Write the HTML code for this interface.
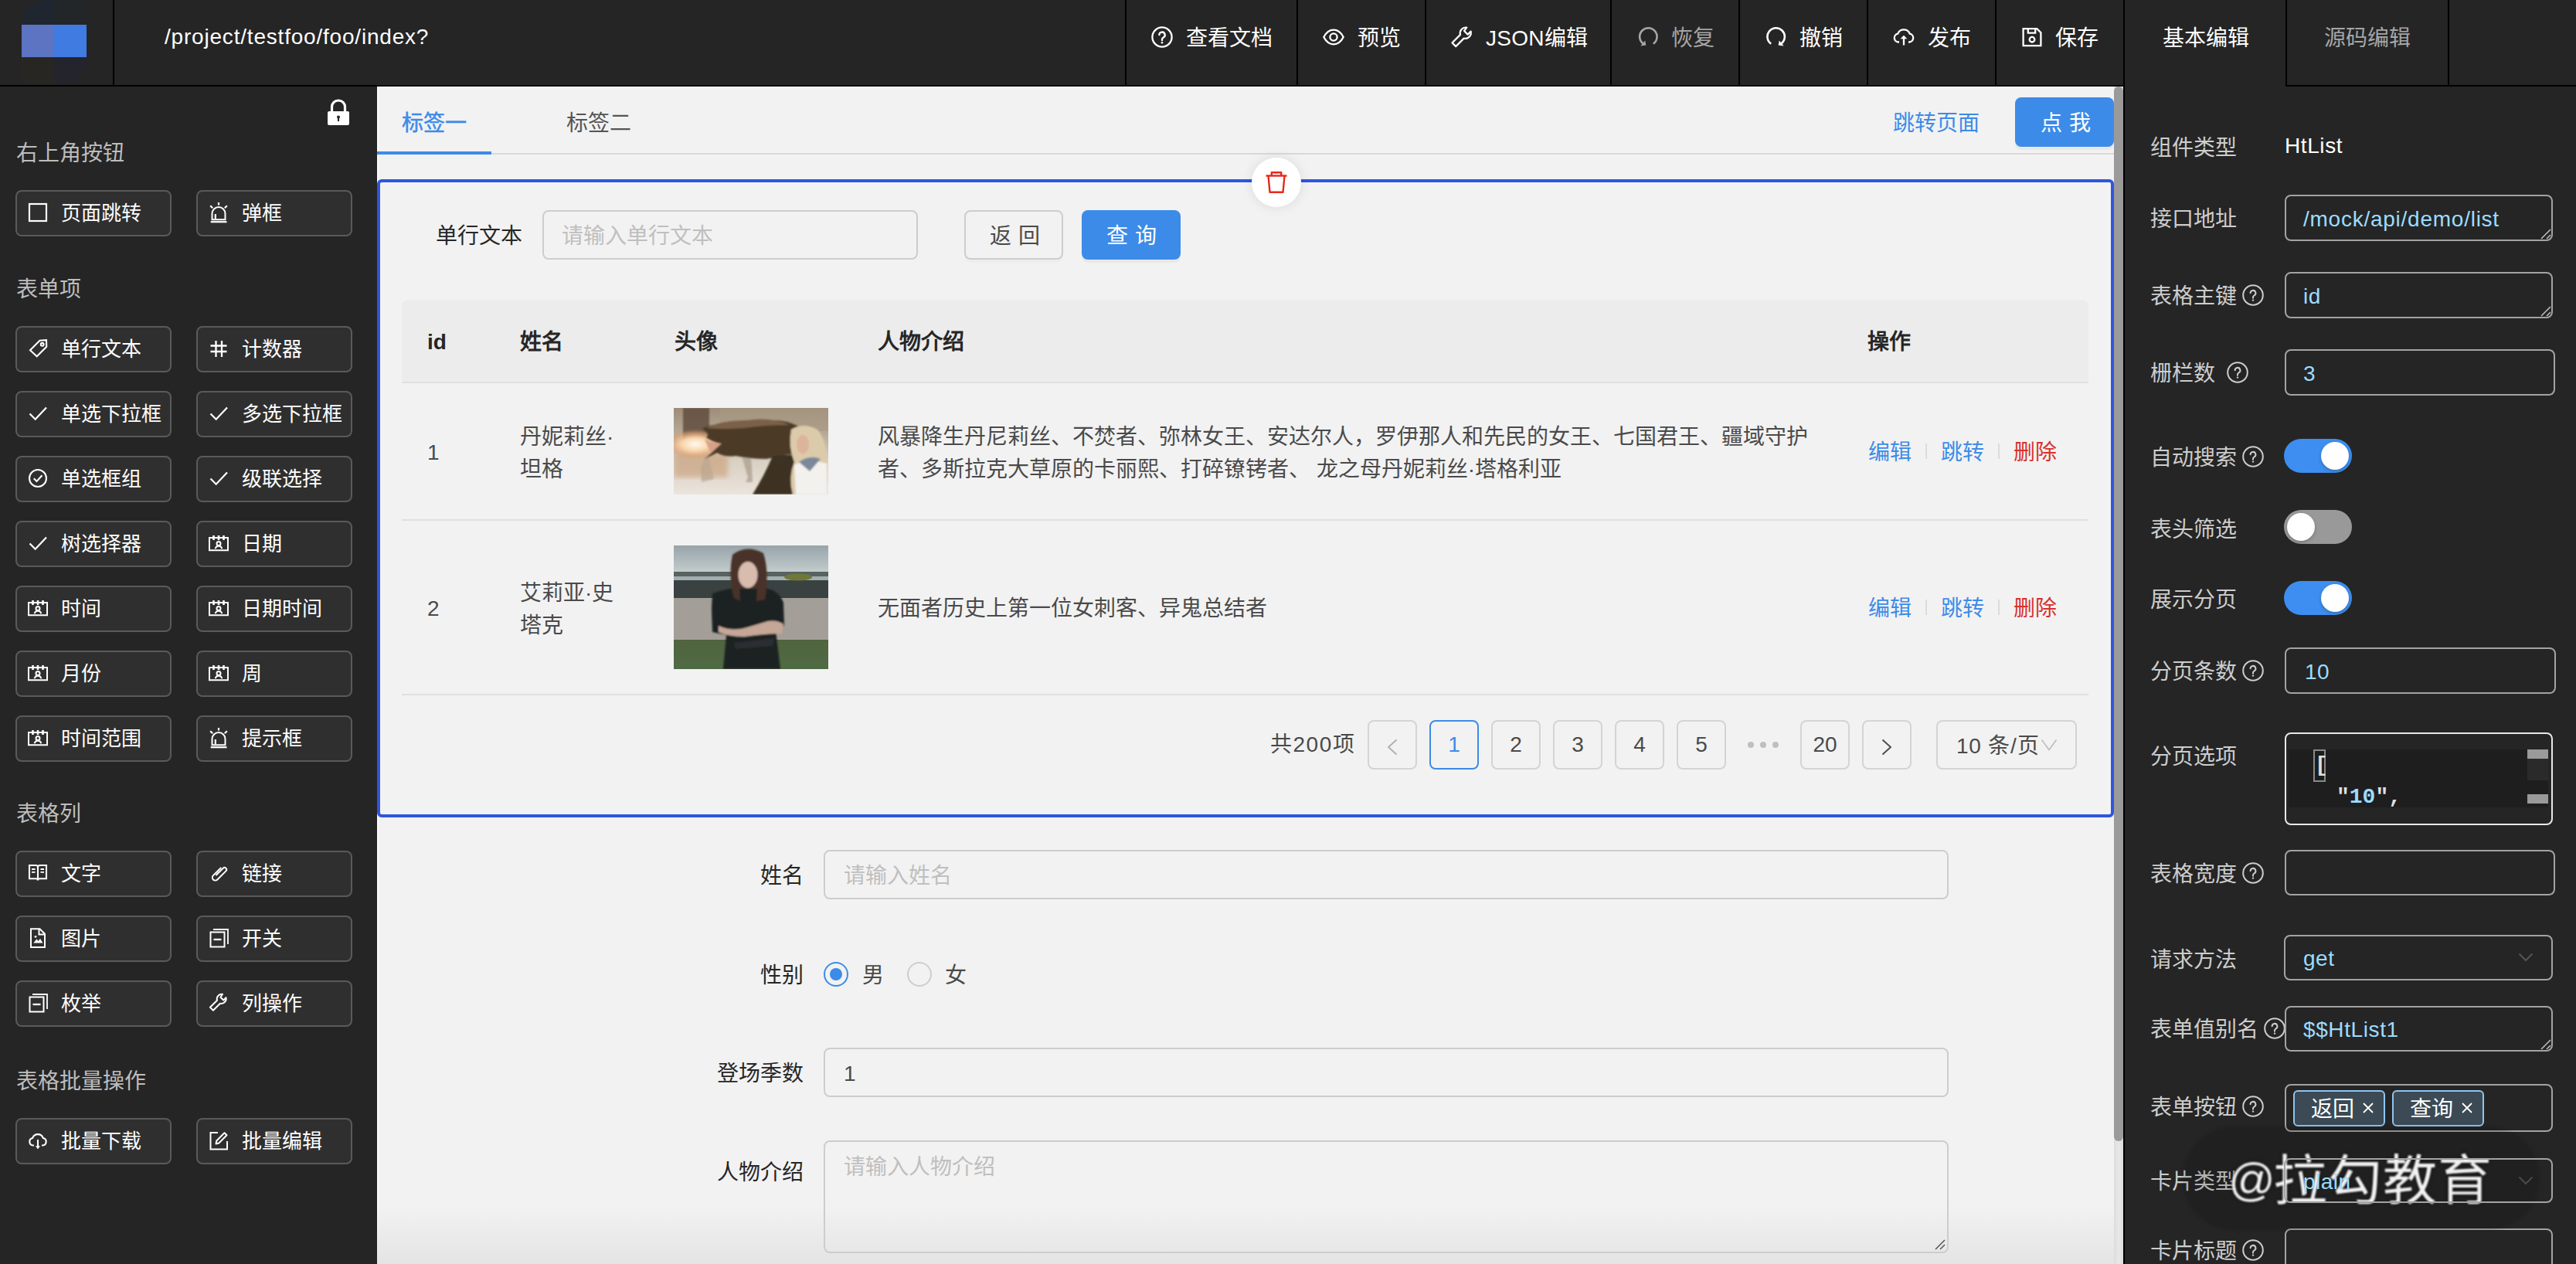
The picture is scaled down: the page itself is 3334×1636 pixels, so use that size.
<!DOCTYPE html>
<html lang="zh-CN">
<head>
<meta charset="utf-8">
<style>
*{box-sizing:border-box;margin:0;padding:0}
html,body{width:3334px;height:1636px;overflow:hidden;background:#252525;font-family:"Liberation Sans",sans-serif;font-size:28px}
.a{position:absolute}
.t{position:absolute;white-space:nowrap;height:40px;line-height:40px}
svg{display:block;position:absolute;overflow:visible}
.hl{position:absolute;background:#000}
.sb{position:absolute;width:202px;height:60px;border:2px solid #5a5a5a;border-radius:8px;background:#2f2f2f;color:#fff}
.sb span{position:absolute;left:57px;top:8px;line-height:40px;font-size:26px;white-space:nowrap}
.inp{position:absolute;border:2px solid #cdcdcd;border-radius:8px}
.ri{position:absolute;border:2px solid #a3a3a3;border-radius:8px}
</style>
</head>
<body>
<div class="a" style="left:0px;top:0px;width:3334px;height:110px;background:#252525"></div>
<div class="a" style="left:28px;top:0;width:86px;height:108px;border-radius:32px 0 32px 0;overflow:hidden"><div class="a" style="left:0;top:0;width:42px;height:54px;background:#1f2630"></div><div class="a" style="left:42px;top:0;width:70px;height:54px;background:#232628"></div><div class="a" style="left:0;top:54px;width:42px;height:54px;background:#282622"></div><div class="a" style="left:42px;top:54px;width:70px;height:54px;background:#24242d"></div></div>
<div class="a" style="left:28px;top:32px;width:42px;height:42px;background:#5c74c2"></div>
<div class="a" style="left:70px;top:32px;width:42px;height:42px;background:#3f7be1"></div>
<div class="a" style="left:146px;top:0px;width:2px;height:110px;background:#000"></div>
<div class="t" style="left:213px;top:28px;color:#fff;font-size:28px;letter-spacing:0.8px">/project/testfoo/foo/index?</div>
<div class="a" style="left:1456px;top:0px;width:2px;height:110px;background:#000"></div>
<div class="a" style="left:1678px;top:0px;width:2px;height:110px;background:#000"></div>
<div class="a" style="left:1844px;top:0px;width:2px;height:110px;background:#000"></div>
<div class="a" style="left:2084px;top:0px;width:2px;height:110px;background:#000"></div>
<div class="a" style="left:2250px;top:0px;width:2px;height:110px;background:#000"></div>
<div class="a" style="left:2416px;top:0px;width:2px;height:110px;background:#000"></div>
<div class="a" style="left:2582px;top:0px;width:2px;height:110px;background:#000"></div>
<div class="a" style="left:2748px;top:0px;width:2px;height:110px;background:#000"></div>
<div class="a" style="left:2958px;top:0px;width:2px;height:110px;background:#000"></div>
<div class="a" style="left:3168px;top:0px;width:2px;height:110px;background:#000"></div>
<svg style="left:1490px;top:34px" width="28" height="28" viewBox="0 0 28 28" fill="none" stroke="#fff" stroke-width="2.3"><circle cx="14" cy="14" r="12.6"/><path d="M10.3 11.2a3.7 3.7 0 1 1 5.4 3.3c-1.1.6-1.7 1.3-1.7 2.5v1.2" stroke-linecap="round"/><circle cx="14" cy="21.2" r="1.3" fill="#fff" stroke="none"/></svg>
<div class="t" style="left:1535px;top:30px;color:#fff;font-size:28px;">查看文档</div>
<svg style="left:1712px;top:34px" width="28" height="28" viewBox="0 0 28 28" fill="none" stroke="#fff" stroke-width="2.3"><path d="M1.3 14C4.5 7.8 9 4.7 14 4.7S23.5 7.8 26.7 14C23.5 20.2 19 23.3 14 23.3S4.5 20.2 1.3 14Z" stroke-linejoin="round"/><circle cx="14" cy="14" r="4.6"/></svg>
<div class="t" style="left:1757px;top:30px;color:#fff;font-size:28px;">预览</div>
<svg style="left:1878px;top:34px" width="28" height="28" viewBox="0 0 28 28" fill="none" stroke="#fff" stroke-width="2.2" stroke-linejoin="round"><path d="M20.3 1.6A7.4 7.4 0 0 0 12 10.9L1.5 21.4 6.2 26.1 16.7 15.6A7.4 7.4 0 0 0 25.6 6.6L21.6 10.6 17 6 Z"/></svg>
<div class="t" style="left:1923px;top:30px;color:#fff;font-size:28px;letter-spacing:0.3px">JSON编辑</div>
<svg style="left:2119px;top:34px" width="28" height="28" viewBox="0 0 28 28" fill="none" stroke="#a6a6a6" stroke-width="2.6"><path d="M7.5 22.3A11.2 11.2 0 1 1 20.8 22.6"/><path d="M4.3 25.4 11.3 24.6 10.2 18.5Z" fill="#a6a6a6" stroke="none"/></svg>
<div class="t" style="left:2163px;top:30px;color:#a6a6a6;font-size:28px;">恢复</div>
<svg style="left:2285px;top:34px" width="28" height="28" viewBox="0 0 28 28" fill="none" stroke="#fff" stroke-width="2.6"><path d="M20.5 22.3A11.2 11.2 0 1 0 7.2 22.6"/><path d="M23.7 25.4 16.7 24.6 17.8 18.5Z" fill="#fff" stroke="none"/></svg>
<div class="t" style="left:2329px;top:30px;color:#fff;font-size:28px;">撤销</div>
<svg style="left:2450px;top:34px" width="28" height="28" viewBox="0 0 28 28" fill="none" stroke="#fff" stroke-width="2.3"><path d="M8 20.5H7A5.5 5.5 0 0 1 6.3 9.6 8.3 8.3 0 0 1 21.7 9.6 5.5 5.5 0 0 1 21 20.5H20"/><path d="M14 24.5V13"/><path d="M10.2 16.3 14 12.2 17.8 16.3" fill="#fff" stroke-width="1"/></svg>
<div class="t" style="left:2495px;top:30px;color:#fff;font-size:28px;">发布</div>
<svg style="left:2616px;top:34px" width="28" height="28" viewBox="0 0 28 28" fill="none" stroke="#fff" stroke-width="2.3"><path d="M2.6 3.2H20.3L25.4 8.3V25.2H2.6Z"/><path d="M8.8 3.2V8.7H18.2V3.2"/><circle cx="14" cy="17.2" r="3.3"/></svg>
<div class="t" style="left:2660px;top:30px;color:#fff;font-size:28px;">保存</div>
<div class="t" style="left:2799px;top:30px;color:#fff;font-size:28px;">基本编辑</div>
<div class="t" style="left:3008px;top:30px;color:#a6a6a6;font-size:28px;">源码编辑</div>
<div class="a" style="left:0px;top:110px;width:2750px;height:2px;background:#000"></div>
<div class="a" style="left:2958px;top:110px;width:376px;height:2px;background:#000"></div>
<div class="a" style="left:0px;top:112px;width:488px;height:1524px;background:#252525"></div>
<svg style="left:423px;top:129px" width="30" height="34" viewBox="0 0 30 34"><path d="M6.5 15V9.5a8.5 8.5 0 0 1 17 0V15" fill="none" stroke="#fff" stroke-width="3.2"/><rect x="1" y="15" width="28" height="18" rx="2" fill="#fff"/><circle cx="15" cy="22.5" r="2" fill="#252525"/><rect x="14" y="23" width="2" height="5" fill="#252525"/></svg>
<div class="t" style="left:21px;top:179px;color:#bdbdbd;font-size:28px;">右上角按钮</div>
<div class="sb" style="left:20px;top:246px"><span>页面跳转</span></div>
<svg style="left:37px;top:263px" width="24" height="24" viewBox="0 0 24 24"><rect x="1" y="1" width="22" height="22" fill="none" stroke="#fff" stroke-width="2.2"/></svg>
<div class="sb" style="left:254px;top:246px"><span>弹框</span></div>
<svg style="left:271px;top:262px" width="24" height="26" viewBox="0 0 24 26"><g fill="none" stroke="#fff" stroke-width="2"><path d="M3.5 22.3V14.5a8.5 8.5 0 0 1 17 0v7.8Z"/><path d="M7.8 21.5v-6.5" stroke-width="2.2"/><path d="M1.7 25.2h20.8" stroke-width="2.2"/><path d="M12 0v3.5M1.2 4.2l3 3M22.8 4.2l-3 3" stroke-width="2.2"/></g></svg>
<div class="t" style="left:21px;top:355px;color:#bdbdbd;font-size:28px;">表单项</div>
<div class="sb" style="left:20px;top:422px"><span>单行文本</span></div>
<svg style="left:37px;top:439px" width="24" height="24" viewBox="0 0 24 24"><g fill="none" stroke="#fff" stroke-width="2.1" stroke-linejoin="miter"><path d="M2 14.3 14.5 1.8 23 1.2 23.2 9.8 10.7 22.3Z"/><circle cx="17.7" cy="6.8" r="1.9"/></g></svg>
<div class="sb" style="left:254px;top:422px"><span>计数器</span></div>
<svg style="left:271px;top:439px" width="24" height="24" viewBox="0 0 24 24"><g fill="none" stroke="#fff" stroke-width="2.3"><path d="M8.5 2v21M16 2v21M1.5 8.5h21M1.5 16h21"/></g></svg>
<div class="sb" style="left:20px;top:506px"><span>单选下拉框</span></div>
<svg style="left:37px;top:523px" width="24" height="24" viewBox="0 0 24 24"><path d="M1.5 12.5 8.7 19.7 23 4.5" fill="none" stroke="#fff" stroke-width="2.3"/></svg>
<div class="sb" style="left:254px;top:506px"><span>多选下拉框</span></div>
<svg style="left:271px;top:523px" width="24" height="24" viewBox="0 0 24 24"><path d="M1.5 12.5 8.7 19.7 23 4.5" fill="none" stroke="#fff" stroke-width="2.3"/></svg>
<div class="sb" style="left:20px;top:590px"><span>单选框组</span></div>
<svg style="left:37px;top:607px" width="24" height="24" viewBox="0 0 24 24"><g fill="none" stroke="#fff" stroke-width="2.1"><circle cx="12" cy="12" r="11"/><path d="M6.8 12.3 10.5 16 17.5 8.3"/></g></svg>
<div class="sb" style="left:254px;top:590px"><span>级联选择</span></div>
<svg style="left:271px;top:607px" width="24" height="24" viewBox="0 0 24 24"><path d="M1.5 12.5 8.7 19.7 23 4.5" fill="none" stroke="#fff" stroke-width="2.3"/></svg>
<div class="sb" style="left:20px;top:674px"><span>树选择器</span></div>
<svg style="left:37px;top:691px" width="24" height="24" viewBox="0 0 24 24"><path d="M1.5 12.5 8.7 19.7 23 4.5" fill="none" stroke="#fff" stroke-width="2.3"/></svg>
<div class="sb" style="left:254px;top:674px"><span>日期</span></div>
<svg style="left:270px;top:693px" width="26" height="21" viewBox="0 0 26 21"><g fill="none" stroke="#fff" stroke-width="2"><path d="M1 3H25V19.2H1Z"/><path d="M6.5 0V6M13 0V6M19.5 0V6" stroke-width="2.6"/><circle cx="13" cy="10.4" r="2.5"/><path d="M8.7 17.2a4.4 4.4 0 0 1 8.6 0"/></g></svg>
<div class="sb" style="left:20px;top:758px"><span>时间</span></div>
<svg style="left:36px;top:777px" width="26" height="21" viewBox="0 0 26 21"><g fill="none" stroke="#fff" stroke-width="2"><path d="M1 3H25V19.2H1Z"/><path d="M6.5 0V6M13 0V6M19.5 0V6" stroke-width="2.6"/><circle cx="13" cy="10.4" r="2.5"/><path d="M8.7 17.2a4.4 4.4 0 0 1 8.6 0"/></g></svg>
<div class="sb" style="left:254px;top:758px"><span>日期时间</span></div>
<svg style="left:270px;top:777px" width="26" height="21" viewBox="0 0 26 21"><g fill="none" stroke="#fff" stroke-width="2"><path d="M1 3H25V19.2H1Z"/><path d="M6.5 0V6M13 0V6M19.5 0V6" stroke-width="2.6"/><circle cx="13" cy="10.4" r="2.5"/><path d="M8.7 17.2a4.4 4.4 0 0 1 8.6 0"/></g></svg>
<div class="sb" style="left:20px;top:842px"><span>月份</span></div>
<svg style="left:36px;top:861px" width="26" height="21" viewBox="0 0 26 21"><g fill="none" stroke="#fff" stroke-width="2"><path d="M1 3H25V19.2H1Z"/><path d="M6.5 0V6M13 0V6M19.5 0V6" stroke-width="2.6"/><circle cx="13" cy="10.4" r="2.5"/><path d="M8.7 17.2a4.4 4.4 0 0 1 8.6 0"/></g></svg>
<div class="sb" style="left:254px;top:842px"><span>周</span></div>
<svg style="left:270px;top:861px" width="26" height="21" viewBox="0 0 26 21"><g fill="none" stroke="#fff" stroke-width="2"><path d="M1 3H25V19.2H1Z"/><path d="M6.5 0V6M13 0V6M19.5 0V6" stroke-width="2.6"/><circle cx="13" cy="10.4" r="2.5"/><path d="M8.7 17.2a4.4 4.4 0 0 1 8.6 0"/></g></svg>
<div class="sb" style="left:20px;top:926px"><span>时间范围</span></div>
<svg style="left:36px;top:945px" width="26" height="21" viewBox="0 0 26 21"><g fill="none" stroke="#fff" stroke-width="2"><path d="M1 3H25V19.2H1Z"/><path d="M6.5 0V6M13 0V6M19.5 0V6" stroke-width="2.6"/><circle cx="13" cy="10.4" r="2.5"/><path d="M8.7 17.2a4.4 4.4 0 0 1 8.6 0"/></g></svg>
<div class="sb" style="left:254px;top:926px"><span>提示框</span></div>
<svg style="left:271px;top:942px" width="24" height="26" viewBox="0 0 24 26"><g fill="none" stroke="#fff" stroke-width="2"><path d="M3.5 22.3V14.5a8.5 8.5 0 0 1 17 0v7.8Z"/><path d="M7.8 21.5v-6.5" stroke-width="2.2"/><path d="M1.7 25.2h20.8" stroke-width="2.2"/><path d="M12 0v3.5M1.2 4.2l3 3M22.8 4.2l-3 3" stroke-width="2.2"/></g></svg>
<div class="t" style="left:21px;top:1034px;color:#bdbdbd;font-size:28px;">表格列</div>
<div class="sb" style="left:20px;top:1101px"><span>文字</span></div>
<svg style="left:37px;top:1118px" width="24" height="24" viewBox="0 0 24 24"><g fill="none" stroke="#fff" stroke-width="2.1"><path d="M1 2h8.5q2.5 0 2.5 2.5V21.5q0-2.2-2.5-2.2H1ZM23 2h-8.5Q12 2 12 4.5V21.5q0-2.2 2.5-2.2H23Z"/><path d="M4 7h4.5M4 10.8h4.5M15.5 7H20M15.5 10.8H20" stroke-width="1.8"/></g></svg>
<div class="sb" style="left:254px;top:1101px"><span>链接</span></div>
<svg style="left:271px;top:1118px" width="24" height="24" viewBox="0 0 24 24"><g transform="rotate(45 12 13)"><path d="M8.5 5V19.5a3.8 3.8 0 0 0 7.6 0V3.8a2.6 2.6 0 0 0-5.2 0V17" fill="none" stroke="#fff" stroke-width="2"/></g></svg>
<div class="sb" style="left:20px;top:1185px"><span>图片</span></div>
<svg style="left:37px;top:1201px" width="24" height="26" viewBox="0 0 24 26"><g fill="none" stroke="#fff" stroke-width="2"><path d="M3 1.2h11.5L21 7.7V25H3Z"/><path d="M13.5 1.2v7.3H21"/></g><circle cx="9" cy="11.3" r="1.4" fill="#fff"/><path d="M6.3 19.5 10.5 14.5 12.5 17 15 14 18.5 19.5Z" fill="#fff"/></svg>
<div class="sb" style="left:254px;top:1185px"><span>开关</span></div>
<svg style="left:271px;top:1202px" width="24" height="24" viewBox="0 0 24 24"><g fill="none" stroke="#fff" stroke-width="2"><rect x="1.5" y="4.5" width="18" height="19"/><path d="M5 1h19v19" stroke-width="1.8"/><path d="M5.5 14h10" stroke-width="2.3"/></g></svg>
<div class="sb" style="left:20px;top:1269px"><span>枚举</span></div>
<svg style="left:37px;top:1286px" width="24" height="24" viewBox="0 0 24 24"><g fill="none" stroke="#fff" stroke-width="2"><rect x="1.5" y="4.5" width="18" height="19"/><path d="M5 1h19v19" stroke-width="1.8"/><path d="M5.5 14h10" stroke-width="2.3"/></g></svg>
<div class="sb" style="left:254px;top:1269px"><span>列操作</span></div>
<svg style="left:271px;top:1286px" width="24" height="24" viewBox="0 0 24 24"><path d="M17 .8A6.2 6.2 0 0 0 10 8.7L.9 17.8 4.9 21.8 14 12.7A6.2 6.2 0 0 0 21.5 5.2L18.2 8.5 14.4 4.7Z" fill="none" stroke="#fff" stroke-width="2" stroke-linejoin="round"/></svg>
<div class="t" style="left:21px;top:1380px;color:#bdbdbd;font-size:28px;">表格批量操作</div>
<div class="sb" style="left:20px;top:1447px"><span>批量下载</span></div>
<svg style="left:37px;top:1464px" width="24" height="24" viewBox="0 0 24 24"><g fill="none" stroke="#fff" stroke-width="2.1"><path d="M7 18.5H5.8A4.8 4.8 0 0 1 5.2 9 7.2 7.2 0 0 1 18.8 9 4.8 4.8 0 0 1 18.2 18.5H17"/><path d="M12 11v11.5"/></g><path d="M8.8 19.2 12 23 15.2 19.2Z" fill="#fff"/></svg>
<div class="sb" style="left:254px;top:1447px"><span>批量编辑</span></div>
<svg style="left:271px;top:1464px" width="24" height="24" viewBox="0 0 24 24"><g fill="none" stroke="#fff" stroke-width="2"><path d="M11 2H1.5v21.5H23V13"/><path d="M8.5 16.5 9.3 12.5 19.5 2.3 22.5 5.3 12.3 15.5Z" stroke-linejoin="round"/></g></svg>
<div class="a" style="left:488px;top:112px;width:2260px;height:1524px;background:#f2f2f2"></div>
<div class="a" style="left:488px;top:112px;width:2248px;height:2px;background:#fff"></div>
<div class="a" style="left:488px;top:112px;width:2px;height:1524px;background:#fafafa"></div>
<div class="a" style="left:488px;top:1560px;width:2248px;height:76px;background:linear-gradient(#f2f2f200,#e4e4e4)"></div>
<div class="t" style="left:520px;top:140px;color:#3d8be8;font-size:28px;-webkit-text-stroke:0.5px #3d8be8">标签一</div>
<div class="t" style="left:733px;top:140px;color:#555;font-size:28px;">标签二</div>
<div class="a" style="left:488px;top:198px;width:2248px;height:2px;background:#d9d9d9"></div>
<div class="a" style="left:488px;top:196px;width:148px;height:4px;background:#3d8be8"></div>
<div class="t" style="left:2450px;top:140px;color:#3d8be8;font-size:28px;">跳转页面</div>
<div class="a" style="left:2608px;top:126px;width:128px;height:64px;border-radius:8px;background:#3d8be8;box-shadow:0 4px 0 rgba(0,0,0,0.04)"></div>
<div class="t" style="left:2641px;top:140px;color:#fff;font-size:28px;letter-spacing:0.6px">点&nbsp;我</div>
<div class="a" style="left:488px;top:232px;width:2248px;height:826px;border:4px solid #2f55e0;border-radius:6px"></div>
<div class="a" style="left:1620px;top:204px;width:64px;height:64px;border-radius:50%;background:#fff;box-shadow:0 0 16px rgba(0,0,0,0.10)"></div>
<svg style="left:1637px;top:221px" width="30" height="30" viewBox="0 0 30 30" fill="none" stroke="#e8271a" stroke-width="2.4" stroke-linejoin="round"><path d="M1.5 6.5H28.5"/><path d="M8.8 6.5V2.2H21.2V6.5"/><path d="M4.5 6.5 6.5 27.8H23.5L25.5 6.5"/></svg>
<div class="t" style="left:564px;top:286px;color:#262626;font-size:28px;">单行文本</div>
<div class="inp" style="left:702px;top:272px;width:486px;height:64px"></div>
<div class="t" style="left:727px;top:286px;color:#bfbfbf;font-size:28px;">请输入单行文本</div>
<div class="a" style="left:1248px;top:272px;width:128px;height:64px;border:2px solid #cdcdcd;border-radius:8px;box-shadow:0 4px 0 rgba(0,0,0,0.02)"></div>
<div class="t" style="left:1281px;top:286px;color:#4a4a4a;font-size:28px;letter-spacing:0.6px">返&nbsp;回</div>
<div class="a" style="left:1400px;top:272px;width:128px;height:64px;border-radius:8px;background:#3d8be8;box-shadow:0 4px 0 rgba(0,0,0,0.04)"></div>
<div class="t" style="left:1432px;top:286px;color:#fff;font-size:28px;letter-spacing:0.6px">查&nbsp;询</div>
<div class="a" style="left:520px;top:388px;width:2183px;height:106px;background:#ececec;border-radius:8px 8px 0 0"></div>
<div class="a" style="left:520px;top:494px;width:2183px;height:2px;background:#e0e0e0"></div>
<div class="t" style="left:553px;top:423px;color:#262626;font-size:28px;font-weight:bold">id</div>
<div class="t" style="left:673px;top:423px;color:#262626;font-size:28px;font-weight:bold">姓名</div>
<div class="t" style="left:873px;top:423px;color:#262626;font-size:28px;font-weight:bold">头像</div>
<div class="t" style="left:1136px;top:423px;color:#262626;font-size:28px;font-weight:bold">人物介绍</div>
<div class="t" style="left:2417px;top:423px;color:#262626;font-size:28px;font-weight:bold">操作</div>
<div class="a" style="left:520px;top:672px;width:2183px;height:2px;background:#e0e0e0"></div>
<div class="a" style="left:520px;top:898px;width:2183px;height:2px;background:#e0e0e0"></div>
<div class="t" style="left:553px;top:566px;color:#4a4a4a;font-size:28px;">1</div>
<div class="t" style="left:673px;top:546px;color:#4a4a4a;font-size:28px;">丹妮莉丝·</div>
<div class="t" style="left:673px;top:588px;color:#4a4a4a;font-size:28px;">坦格</div>
<div class="t" style="left:1136px;top:546px;color:#4a4a4a;font-size:28px;">风暴降生丹尼莉丝、不焚者、弥林女王、安达尔人，罗伊那人和先民的女王、七国君王、疆域守护</div>
<div class="t" style="left:1136px;top:588px;color:#4a4a4a;font-size:28px;">者、多斯拉克大草原的卡丽熙、打碎镣铐者、&nbsp;龙之母丹妮莉丝·塔格利亚</div>
<div class="t" style="left:553px;top:768px;color:#4a4a4a;font-size:28px;">2</div>
<div class="t" style="left:673px;top:748px;color:#4a4a4a;font-size:28px;">艾莉亚·史</div>
<div class="t" style="left:673px;top:790px;color:#4a4a4a;font-size:28px;">塔克</div>
<div class="t" style="left:1136px;top:768px;color:#4a4a4a;font-size:28px;">无面者历史上第一位女刺客、异鬼总结者</div>
<div class="t" style="left:2418px;top:566px;color:#3d8be8;font-size:28px;">编辑</div>
<div class="a" style="left:2492px;top:574px;width:2px;height:20px;background:#dcdcdc"></div>
<div class="t" style="left:2512px;top:566px;color:#3d8be8;font-size:28px;">跳转</div>
<div class="a" style="left:2586px;top:574px;width:2px;height:20px;background:#dcdcdc"></div>
<div class="t" style="left:2606px;top:566px;color:#d9302a;font-size:28px;">删除</div>
<div class="t" style="left:2418px;top:768px;color:#3d8be8;font-size:28px;">编辑</div>
<div class="a" style="left:2492px;top:776px;width:2px;height:20px;background:#dcdcdc"></div>
<div class="t" style="left:2512px;top:768px;color:#3d8be8;font-size:28px;">跳转</div>
<div class="a" style="left:2586px;top:776px;width:2px;height:20px;background:#dcdcdc"></div>
<div class="t" style="left:2606px;top:768px;color:#d9302a;font-size:28px;">删除</div>
<svg style="left:872px;top:528px;overflow:hidden" width="200" height="112" viewBox="0 0 200 112">
<defs><linearGradient id="bg1" x1="0" y1="0" x2="0" y2="1"><stop offset="0" stop-color="#9c8c78"/><stop offset="0.3" stop-color="#b8aa96"/><stop offset="0.6" stop-color="#d9cfc2"/><stop offset="1" stop-color="#ebe4dc"/></linearGradient>
<radialGradient id="fire" cx="0.5" cy="0.5" r="0.5"><stop offset="0" stop-color="#fffaf0"/><stop offset="0.45" stop-color="#f8d6ac"/><stop offset="0.8" stop-color="#e0a070" stop-opacity="0.6"/><stop offset="1" stop-color="#d09060" stop-opacity="0"/></radialGradient>
<filter id="bl"><feGaussianBlur stdDeviation="0.8"/></filter><filter id="bl3"><feGaussianBlur stdDeviation="3"/></filter></defs>
<rect width="200" height="112" fill="url(#bg1)"/>
<rect x="60" y="0" width="140" height="30" fill="#a89a84" opacity="0.6"/>
<rect x="12" y="0" width="34" height="44" fill="#5d4a3a" opacity="0.8" filter="url(#bl)"/>
<rect x="0" y="60" width="70" height="30" fill="#c89870" opacity="0.55" filter="url(#bl3)"/>
<ellipse cx="28" cy="47" rx="40" ry="19" fill="url(#fire)" filter="url(#bl)"/>
<g filter="url(#bl)">
<path d="M88 62 L96 90 L93 96 L102 96 L100 62Z" fill="#a69a8a" opacity="0.7"/>
<path d="M35 78 Q40 60 45 62 L52 92 L36 96Z" fill="#bba78e" opacity="0.7"/>
<path d="M37 27 Q48 20 62 23 Q85 14 110 18 Q140 12 162 24 L165 62 Q150 58 140 62 L120 66 Q100 66 80 62 Q66 64 56 58 L40 66 Q52 56 60 46 Q50 44 42 38 Q48 34 37 27Z" fill="#4b3a27"/>
<path d="M42 26 Q60 16 95 16 Q125 11 150 22 Q120 22 90 26 Q66 28 42 26Z" fill="#7a604a"/>
<path d="M40 40 Q50 46 62 46 L48 58 Q44 50 40 40Z" fill="#d8a088"/>
<path d="M102 112 Q118 86 128 62 L160 60 L162 112Z" fill="#3d3220"/>
<path d="M152 28 Q168 18 186 28 Q200 44 198 80 L196 112 L154 112 Q148 90 156 70 Q148 50 152 28Z" fill="#dccbaa"/>
<path d="M156 74 Q172 64 198 72 L198 112 L158 112Z" fill="#f3f1ee"/>
<ellipse cx="167" cy="47" rx="8" ry="12" fill="#dcb39c"/>
<path d="M162 70 Q176 60 190 66 L176 82 Z" fill="#7b879b"/>
</g></svg>
<svg style="left:872px;top:706px;overflow:hidden" width="200" height="160" viewBox="0 0 200 160">
<defs><linearGradient id="sky" x1="0" y1="0" x2="0" y2="1"><stop offset="0" stop-color="#97a4a9"/><stop offset="1" stop-color="#c5cecf"/></linearGradient>
<linearGradient id="grass" x1="0" y1="0" x2="0" y2="1"><stop offset="0" stop-color="#50643f"/><stop offset="1" stop-color="#4f6b44"/></linearGradient>
<filter id="bl2"><feGaussianBlur stdDeviation="0.8"/></filter></defs>
<rect width="200" height="36" fill="url(#sky)"/>
<rect y="34" width="200" height="7" fill="#58625f"/>
<rect y="40" width="200" height="6" fill="#a2afb0"/>
<rect y="45" width="200" height="24" fill="#3a4241"/>
<rect y="68" width="200" height="56" fill="#a39f98"/>
<rect y="122" width="200" height="38" fill="url(#grass)"/>
<ellipse cx="161" cy="41" rx="18" ry="4.5" fill="#6f7838"/>
<g filter="url(#bl2)">
<path d="M50 62 Q66 56 84 55 L116 55 Q136 57 142 74 L143 104 L132 110 L138 160 L64 160 L68 116 L50 112 L49 82Z" fill="#1d2424"/>
<path d="M76 12 Q94 -2 116 10 Q124 34 118 70 L107 72 L108 56 L85 56 L86 72 L78 68 Q70 40 76 12Z" fill="#4a3229"/>
<ellipse cx="96" cy="38" rx="12.5" ry="17" fill="#d8bcae"/>
<path d="M58 104 Q76 112 95 106 L122 98 Q134 96 142 102 L140 114 Q120 114 92 118 Q70 118 58 112Z" fill="#c5a697"/>
<path d="M78 126 L130 120 L128 130 L80 134Z" fill="#2b2f30"/>
</g></svg>
<div class="t" style="left:1644px;top:944px;color:#4a4a4a;font-size:28px;letter-spacing:1.5px">共200项</div>
<div class="a" style="left:1770px;top:932px;width:64px;height:64px;border:2px solid #d4d4d4;border-radius:8px;text-align:center;line-height:60px;color:#4a4a4a;font-size:28px"><svg style="left:23px;top:22px" width="14" height="22" viewBox="0 0 14 22"><path d="M12.5 1.5 2 11 12.5 20.5" fill="none" stroke="#b0b0b0" stroke-width="1.9"/></svg></div>
<div class="a" style="left:1850px;top:932px;width:64px;height:64px;border:2px solid #3d8be8;border-radius:8px;text-align:center;line-height:60px;color:#3d8be8;font-size:28px">1</div>
<div class="a" style="left:1930px;top:932px;width:64px;height:64px;border:2px solid #d4d4d4;border-radius:8px;text-align:center;line-height:60px;color:#4a4a4a;font-size:28px">2</div>
<div class="a" style="left:2010px;top:932px;width:64px;height:64px;border:2px solid #d4d4d4;border-radius:8px;text-align:center;line-height:60px;color:#4a4a4a;font-size:28px">3</div>
<div class="a" style="left:2090px;top:932px;width:64px;height:64px;border:2px solid #d4d4d4;border-radius:8px;text-align:center;line-height:60px;color:#4a4a4a;font-size:28px">4</div>
<div class="a" style="left:2170px;top:932px;width:64px;height:64px;border:2px solid #d4d4d4;border-radius:8px;text-align:center;line-height:60px;color:#4a4a4a;font-size:28px">5</div>
<div class="a" style="left:2262px;top:960px;width:8px;height:8px;border-radius:50%;background:#bfbfbf"></div>
<div class="a" style="left:2278px;top:960px;width:8px;height:8px;border-radius:50%;background:#bfbfbf"></div>
<div class="a" style="left:2294px;top:960px;width:8px;height:8px;border-radius:50%;background:#bfbfbf"></div>
<div class="a" style="left:2330px;top:932px;width:64px;height:64px;border:2px solid #d4d4d4;border-radius:8px;text-align:center;line-height:60px;color:#4a4a4a;font-size:28px">20</div>
<div class="a" style="left:2410px;top:932px;width:64px;height:64px;border:2px solid #d4d4d4;border-radius:8px;text-align:center;line-height:60px;color:#4a4a4a;font-size:28px"><svg style="left:23px;top:22px" width="14" height="22" viewBox="0 0 14 22"><path d="M1.5 1.5 12 11 1.5 20.5" fill="none" stroke="#4a4a4a" stroke-width="1.9"/></svg></div>
<div class="a" style="left:2506px;top:932px;width:182px;height:64px;border:2px solid #d4d4d4;border-radius:8px"></div>
<div class="t" style="left:2532px;top:946px;color:#4a4a4a;font-size:28px;letter-spacing:0.8px">10 条/页</div>
<svg style="left:2641px;top:956px" width="22" height="16" viewBox="0 0 22 16"><path d="M1.5 1.5 11 14.5 20.5 1.5" fill="none" stroke="#bfbfbf" stroke-width="1.7"/></svg>
<div class="t" style="left:984px;top:1114px;color:#262626;font-size:28px;">姓名</div>
<div class="inp" style="left:1066px;top:1100px;width:1456px;height:64px"></div>
<div class="t" style="left:1092px;top:1114px;color:#bfbfbf;font-size:28px;">请输入姓名</div>
<div class="t" style="left:984px;top:1243px;color:#262626;font-size:28px;">性别</div>
<div class="a" style="left:1066px;top:1245px;width:32px;height:32px;border:2px solid #3d8be8;border-radius:50%"></div>
<div class="a" style="left:1074px;top:1253px;width:16px;height:16px;border-radius:50%;background:#3d8be8"></div>
<div class="t" style="left:1116px;top:1243px;color:#4a4a4a;font-size:28px;">男</div>
<div class="a" style="left:1174px;top:1245px;width:32px;height:32px;border:2px solid #cdcdcd;border-radius:50%"></div>
<div class="t" style="left:1223px;top:1243px;color:#4a4a4a;font-size:28px;">女</div>
<div class="t" style="left:928px;top:1370px;color:#262626;font-size:28px;">登场季数</div>
<div class="inp" style="left:1066px;top:1356px;width:1456px;height:64px"></div>
<div class="t" style="left:1092px;top:1370px;color:#4a4a4a;font-size:28px;">1</div>
<div class="t" style="left:928px;top:1498px;color:#262626;font-size:28px;">人物介绍</div>
<div class="inp" style="left:1066px;top:1476px;width:1456px;height:146px"></div>
<div class="t" style="left:1092px;top:1491px;color:#bfbfbf;font-size:28px;">请输入人物介绍</div>
<svg style="left:2504px;top:1604px" width="14" height="14" viewBox="0 0 14 14"><path d="M13 1 1 13M13 7 7 13" stroke="#555" stroke-width="1.5"/></svg>
<div class="a" style="left:2736px;top:112px;width:12px;height:1524px;background:linear-gradient(90deg,#dcdcdc,#e8e8e8 50%,#dcdcdc)"></div>
<div class="a" style="left:2736px;top:112px;width:12px;height:1365px;background:#9a9a9a;border-radius:6px"></div>
<div class="a" style="left:2748px;top:112px;width:2px;height:1524px;background:#000"></div>
<div class="a" style="left:2750px;top:112px;width:584px;height:1524px;background:#252525"></div>
<div class="t" style="left:2783px;top:172px;color:#cdcdcd;font-size:28px;">组件类型</div>
<div class="t" style="left:2957px;top:169px;color:#fff;font-size:28px;letter-spacing:0.6px">HtList</div>
<div class="t" style="left:2783px;top:264px;color:#cdcdcd;font-size:28px;">接口地址</div>
<div class="ri" style="left:2957px;top:252px;width:347px;height:60px"></div>
<svg style="left:3288px;top:296px" width="14" height="14" viewBox="0 0 14 14"><path d="M13 1 1 13M13 8 8 13" stroke="#bbb" stroke-width="1.6"/></svg>
<div class="t" style="left:2981px;top:264px;color:#9cdcfe;font-size:28px;letter-spacing:0.75px">/mock/api/demo/list</div>
<div class="t" style="left:2783px;top:364px;color:#cdcdcd;font-size:28px;">表格主键</div>
<svg style="left:2902px;top:368px" width="28" height="28" viewBox="0 0 28 28" fill="none" stroke="#cdcdcd" stroke-width="2"><circle cx="14" cy="14" r="12.8"/><path d="M10.6 11.3a3.4 3.4 0 1 1 5 3c-1 .55-1.6 1.2-1.6 2.3v1.1" stroke-linecap="round"/><circle cx="14" cy="20.6" r="1.2" fill="#cdcdcd" stroke="none"/></svg>
<div class="ri" style="left:2957px;top:352px;width:347px;height:60px"></div>
<svg style="left:3288px;top:396px" width="14" height="14" viewBox="0 0 14 14"><path d="M13 1 1 13M13 8 8 13" stroke="#bbb" stroke-width="1.6"/></svg>
<div class="t" style="left:2981px;top:364px;color:#9cdcfe;font-size:28px;letter-spacing:0.5px">id</div>
<div class="t" style="left:2783px;top:464px;color:#cdcdcd;font-size:28px;">栅栏数</div>
<svg style="left:2882px;top:468px" width="28" height="28" viewBox="0 0 28 28" fill="none" stroke="#cdcdcd" stroke-width="2"><circle cx="14" cy="14" r="12.8"/><path d="M10.6 11.3a3.4 3.4 0 1 1 5 3c-1 .55-1.6 1.2-1.6 2.3v1.1" stroke-linecap="round"/><circle cx="14" cy="20.6" r="1.2" fill="#cdcdcd" stroke="none"/></svg>
<div class="ri" style="left:2957px;top:452px;width:350px;height:60px"></div>
<div class="t" style="left:2981px;top:464px;color:#9cdcfe;font-size:28px;">3</div>
<div class="t" style="left:2783px;top:573px;color:#cdcdcd;font-size:28px;">自动搜索</div>
<svg style="left:2902px;top:577px" width="28" height="28" viewBox="0 0 28 28" fill="none" stroke="#cdcdcd" stroke-width="2"><circle cx="14" cy="14" r="12.8"/><path d="M10.6 11.3a3.4 3.4 0 1 1 5 3c-1 .55-1.6 1.2-1.6 2.3v1.1" stroke-linecap="round"/><circle cx="14" cy="20.6" r="1.2" fill="#cdcdcd" stroke="none"/></svg>
<div class="a" style="left:2956px;top:568px;width:88px;height:44px;border-radius:22px;background:#3d8ef0"></div>
<div class="a" style="left:3004px;top:572px;width:36px;height:36px;border-radius:50%;background:#fff;box-shadow:0 2px 4px rgba(0,35,11,0.25)"></div>
<div class="t" style="left:2783px;top:666px;color:#cdcdcd;font-size:28px;">表头筛选</div>
<div class="a" style="left:2956px;top:660px;width:88px;height:44px;border-radius:22px;background:#999"></div>
<div class="a" style="left:2960px;top:664px;width:36px;height:36px;border-radius:50%;background:#fff;box-shadow:0 2px 4px rgba(0,35,11,0.25)"></div>
<div class="t" style="left:2783px;top:757px;color:#cdcdcd;font-size:28px;">展示分页</div>
<div class="a" style="left:2956px;top:752px;width:88px;height:44px;border-radius:22px;background:#3d8ef0"></div>
<div class="a" style="left:3004px;top:756px;width:36px;height:36px;border-radius:50%;background:#fff;box-shadow:0 2px 4px rgba(0,35,11,0.25)"></div>
<div class="t" style="left:2783px;top:850px;color:#cdcdcd;font-size:28px;">分页条数</div>
<svg style="left:2902px;top:854px" width="28" height="28" viewBox="0 0 28 28" fill="none" stroke="#cdcdcd" stroke-width="2"><circle cx="14" cy="14" r="12.8"/><path d="M10.6 11.3a3.4 3.4 0 1 1 5 3c-1 .55-1.6 1.2-1.6 2.3v1.1" stroke-linecap="round"/><circle cx="14" cy="20.6" r="1.2" fill="#cdcdcd" stroke="none"/></svg>
<div class="ri" style="left:2957px;top:838px;width:351px;height:60px"></div>
<div class="t" style="left:2983px;top:850px;color:#9cdcfe;font-size:28px;letter-spacing:0.5px">10</div>
<div class="t" style="left:2783px;top:960px;color:#cdcdcd;font-size:28px;">分页选项</div>
<div class="a" style="left:2957px;top:948px;width:347px;height:120px;border:2px solid #e8e8e8;border-radius:8px"></div>
<div class="a" style="left:2962px;top:970px;width:336px;height:75px;background:#1e1e1e"></div>
<div class="a" style="left:3271px;top:970px;width:27px;height:40px;background:#2a2a2a"></div>
<div class="a" style="left:3271px;top:970px;width:27px;height:12px;background:#9a9a9a"></div>
<div class="a" style="left:3271px;top:1028px;width:27px;height:12px;background:#9a9a9a"></div>
<div class="a" style="left:2994px;top:970px;width:16px;height:42px;border:2px solid #8a8a8a;background:#1a1f1a"></div>
<div class="t" style="left:2996px;top:970px;height:42px;line-height:42px;font-family:'Liberation Mono',monospace;font-size:28px;font-weight:bold;color:#e0e0e0">[</div>
<div class="t" style="left:3024px;top:1011px;height:42px;line-height:42px;font-family:'Liberation Mono',monospace;font-size:28px;font-weight:bold;color:#e0e0e0">"<span style="color:#9cdcfe">10</span>",</div>
<div class="t" style="left:2783px;top:1112px;color:#cdcdcd;font-size:28px;">表格宽度</div>
<svg style="left:2902px;top:1116px" width="28" height="28" viewBox="0 0 28 28" fill="none" stroke="#cdcdcd" stroke-width="2"><circle cx="14" cy="14" r="12.8"/><path d="M10.6 11.3a3.4 3.4 0 1 1 5 3c-1 .55-1.6 1.2-1.6 2.3v1.1" stroke-linecap="round"/><circle cx="14" cy="20.6" r="1.2" fill="#cdcdcd" stroke="none"/></svg>
<div class="ri" style="left:2957px;top:1100px;width:350px;height:59px"></div>
<div class="t" style="left:2783px;top:1223px;color:#cdcdcd;font-size:28px;">请求方法</div>
<div class="ri" style="left:2956px;top:1210px;width:348px;height:59px"></div>
<div class="t" style="left:2981px;top:1221px;color:#9cdcfe;font-size:28px;letter-spacing:0.5px">get</div>
<svg style="left:3259px;top:1233px" width="20" height="12" viewBox="0 0 20 12"><path d="M1.5 1.5 10 10 18.5 1.5" fill="none" stroke="#555" stroke-width="2"/></svg>
<div class="t" style="left:2783px;top:1313px;color:#cdcdcd;font-size:28px;">表单值别名</div>
<svg style="left:2930px;top:1317px" width="28" height="28" viewBox="0 0 28 28" fill="none" stroke="#cdcdcd" stroke-width="2"><circle cx="14" cy="14" r="12.8"/><path d="M10.6 11.3a3.4 3.4 0 1 1 5 3c-1 .55-1.6 1.2-1.6 2.3v1.1" stroke-linecap="round"/><circle cx="14" cy="20.6" r="1.2" fill="#cdcdcd" stroke="none"/></svg>
<div class="ri" style="left:2957px;top:1302px;width:347px;height:59px"></div>
<svg style="left:3288px;top:1345px" width="14" height="14" viewBox="0 0 14 14"><path d="M13 1 1 13M13 8 8 13" stroke="#bbb" stroke-width="1.6"/></svg>
<div class="t" style="left:2981px;top:1313px;color:#9cdcfe;font-size:28px;letter-spacing:0.6px">$$HtList1</div>
<div class="t" style="left:2783px;top:1414px;color:#cdcdcd;font-size:28px;">表单按钮</div>
<svg style="left:2902px;top:1418px" width="28" height="28" viewBox="0 0 28 28" fill="none" stroke="#cdcdcd" stroke-width="2"><circle cx="14" cy="14" r="12.8"/><path d="M10.6 11.3a3.4 3.4 0 1 1 5 3c-1 .55-1.6 1.2-1.6 2.3v1.1" stroke-linecap="round"/><circle cx="14" cy="20.6" r="1.2" fill="#cdcdcd" stroke="none"/></svg>
<div class="ri" style="left:2957px;top:1403px;width:347px;height:62px"></div>
<div class="a" style="left:2968px;top:1411px;width:119px;height:47px;border:2px solid #8ec5f0;border-radius:6px;background:#3b4a55"></div>
<div class="t" style="left:2991px;top:1416px;color:#fff;font-size:28px;">返回</div>
<svg style="left:3058px;top:1427px" width="14" height="14" viewBox="0 0 14 14"><path d="M1 1 13 13M13 1 1 13" stroke="#fff" stroke-width="1.8"/></svg>
<div class="a" style="left:3096px;top:1411px;width:119px;height:47px;border:2px solid #8ec5f0;border-radius:6px;background:#3b4a55"></div>
<div class="t" style="left:3119px;top:1416px;color:#fff;font-size:28px;">查询</div>
<svg style="left:3186px;top:1427px" width="14" height="14" viewBox="0 0 14 14"><path d="M1 1 13 13M13 1 1 13" stroke="#fff" stroke-width="1.8"/></svg>
<div class="t" style="left:2783px;top:1510px;color:#cdcdcd;font-size:28px;">卡片类型</div>
<svg style="left:3259px;top:1522px" width="20" height="12" viewBox="0 0 20 12"><path d="M1.5 1.5 10 10 18.5 1.5" fill="none" stroke="#555" stroke-width="2"/></svg>
<div class="t" style="left:2783px;top:1600px;color:#cdcdcd;font-size:28px;">卡片标题</div>
<svg style="left:2902px;top:1604px" width="28" height="28" viewBox="0 0 28 28" fill="none" stroke="#cdcdcd" stroke-width="2"><circle cx="14" cy="14" r="12.8"/><path d="M10.6 11.3a3.4 3.4 0 1 1 5 3c-1 .55-1.6 1.2-1.6 2.3v1.1" stroke-linecap="round"/><circle cx="14" cy="20.6" r="1.2" fill="#cdcdcd" stroke="none"/></svg>
<div class="ri" style="left:2957px;top:1590px;width:347px;height:80px"></div>
<div class="a" style="left:2825px;top:1458px;width:462px;height:134px;border-radius:67px;background:rgba(0,0,0,0.13);filter:blur(2px)"></div>
<div class="t" style="left:2884px;top:1477px;height:100px;line-height:100px;font-size:60px;color:#f2f2f2;text-shadow:0 0 2px #000,0 0 4px rgba(0,0,0,.8);filter:blur(0.9px)">@</div>
<div class="t" style="left:2942px;top:1479px;height:100px;line-height:100px;font-size:70px;color:#f2f2f2;text-shadow:0 0 2px #000,0 0 4px rgba(0,0,0,.8);filter:blur(0.9px)">拉</div>
<div class="t" style="left:3013px;top:1479px;height:100px;line-height:100px;font-size:70px;color:#f2f2f2;text-shadow:0 0 2px #000,0 0 4px rgba(0,0,0,.8);filter:blur(0.9px)">勾</div>
<div class="t" style="left:3084px;top:1479px;height:100px;line-height:100px;font-size:70px;color:#f2f2f2;text-shadow:0 0 2px #000,0 0 4px rgba(0,0,0,.8);filter:blur(0.9px)">教</div>
<div class="t" style="left:3155px;top:1479px;height:100px;line-height:100px;font-size:70px;color:#f2f2f2;text-shadow:0 0 2px #000,0 0 4px rgba(0,0,0,.8);filter:blur(0.9px)">育</div>
<div class="ri" style="left:2956px;top:1499px;width:348px;height:58px"></div>
<div class="t" style="left:2981px;top:1510px;color:#9cdcfe;font-size:28px;letter-spacing:0.5px">plain</div>
</body>
</html>
